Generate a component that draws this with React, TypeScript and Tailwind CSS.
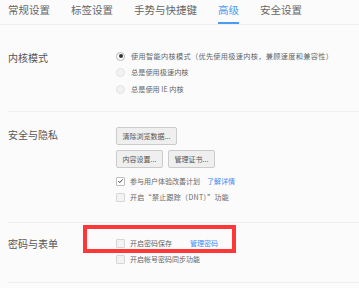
const tabs = ["常规设置", "标签设置", "手势与快捷键", "高级", "安全设置"];

function Radio({ checked }: { checked?: boolean }) {
  return (
    <span
      className={`flex h-[9px] w-[9px] shrink-0 items-center justify-center rounded-full border ${
        checked ? "border-[#b5b5b5] bg-white" : "border-[#e2e2e2] bg-[#f2f2f2]"
      }`}
    >
      {checked && <span className="h-[4px] w-[4px] rounded-full bg-[#333]" />}
    </span>
  );
}

function Checkbox({ checked }: { checked?: boolean }) {
  return (
    <span
      className={`flex h-[9px] w-[9px] shrink-0 items-center justify-center rounded-[1px] border ${
        checked ? "border-[#bdbdbd] bg-white" : "border-[#d6d6d6] bg-[#f3f3f3]"
      }`}
    >
      {checked && (
        <svg viewBox="0 0 10 10" className="h-[8px] w-[8px]">
          <polyline points="2,5 4,7.3 8.2,2.6" fill="none" stroke="#333" strokeWidth="1.3" />
        </svg>
      )}
    </span>
  );
}

function Btn({ label, w }: { label: string; w: string }) {
  return (
    <div
      className={`flex h-[18px] ${w} items-center justify-center rounded-[2px] border border-[#cbcbcb] bg-[#efefef] text-[7px] text-[#555]`}
    >
      {label}
    </div>
  );
}

export default function App() {
  return (
    <div className="relative h-[288px] w-[359px] overflow-hidden bg-[#fbfbfb] font-['Noto_Sans_CJK_SC','Noto_Sans',sans-serif] text-[#555]">
      {/* tabs */}
      <div className="flex h-[25px] gap-[21px] border-b border-[#efefef] pl-[8px] text-[10.5px] text-[#666]">
        {tabs.map((t) => (
          <div
            key={t}
            className={`h-[24px] whitespace-nowrap pt-[2px] leading-[16px] ${
              t === "高级" ? "border-b-2 border-[#4d9bf0] text-[#4d9bf0]" : ""
            }`}
          >
            {t}
          </div>
        ))}
      </div>

      {/* 内核模式 */}
      <div className="ml-[8px] flex h-[87px] border-b border-[#f0f0f0]">
        <div className="w-[108px] pt-[25px] text-[10px] leading-[16px]">内核模式</div>
        <div className="flex flex-col pt-[23px] text-[7.2px] text-[#666]">
          <div className="flex h-[16.5px] items-center gap-[6px] whitespace-nowrap">
            <Radio checked />
            <span className="tracking-[0.3px]">使用智能内核模式（优先使用极速内核，兼顾速度和兼容性）</span>
          </div>
          <div className="flex h-[16.5px] items-center gap-[6px]">
            <Radio />
            <span>总是使用极速内核</span>
          </div>
          <div className="flex h-[16.5px] items-center gap-[6px]">
            <Radio />
            <span>总是使用 IE 内核</span>
          </div>
        </div>
      </div>

      {/* 安全与隐私 */}
      <div className="ml-[8px] flex h-[111px] border-b border-[#f0f0f0]">
        <div className="w-[108px] pt-[15px] text-[10px] leading-[16px]">安全与隐私</div>
        <div className="flex flex-col gap-[5px] pt-[15px] text-[7px] text-[#666]">
          <Btn label="清除浏览数据..." w="w-[61px]" />
          <div className="flex gap-[5px]">
            <Btn label="内容设置..." w="w-[47px]" />
            <Btn label="管理证书..." w="w-[47px]" />
          </div>
          <div>
            <div className="flex h-[16px] items-center gap-[5px] whitespace-nowrap">
              <Checkbox checked />
              <span>参与用户体验改善计划</span>
              <span className="ml-[2px] text-[#3b8cf5]">了解详情</span>
            </div>
            <div className="flex h-[16px] items-center gap-[5px] whitespace-nowrap">
              <Checkbox />
              <span className="tracking-[0.3px]">开启“禁止跟踪（DNT）”功能</span>
            </div>
          </div>
        </div>
      </div>

      {/* 密码与表单 */}
      <div className="ml-[8px] flex h-[60px] border-b border-[#f0f0f0]">
        <div className="w-[108px] pt-[13px] text-[10px] leading-[16px]">密码与表单</div>
        <div className="flex flex-col pt-[12px] text-[7px] text-[#666]">
          <div className="flex h-[16px] items-center gap-[5px] whitespace-nowrap">
            <Checkbox />
            <span>开启密码保存</span>
            <span className="ml-[13px] text-[#3b8cf5]">管理密码</span>
          </div>
          <div className="flex h-[16px] items-center gap-[5px] whitespace-nowrap">
            <Checkbox />
            <span>开启帐号密码同步功能</span>
          </div>
        </div>
      </div>

      {/* annotation box */}
      <div className="absolute left-[83px] top-[225px] h-[28px] w-[153px] border-[4px] border-[#ff3737]" />
    </div>
  );
}
